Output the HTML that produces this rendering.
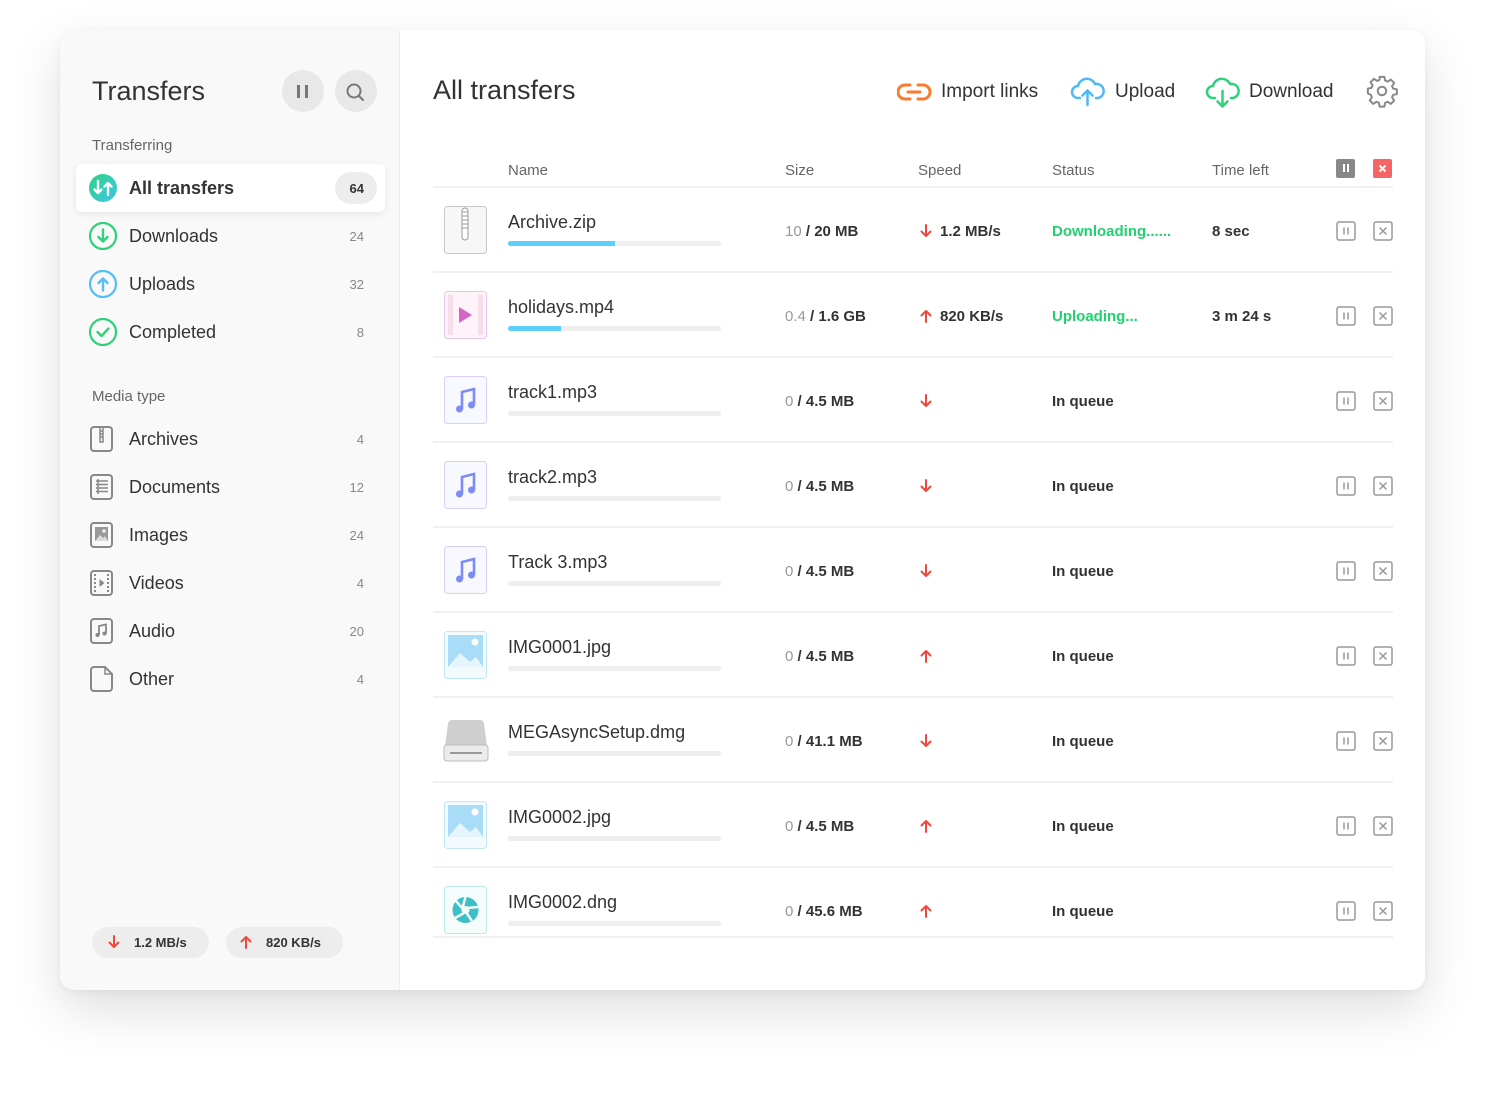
<!DOCTYPE html>
<html><head><meta charset="utf-8"><style>
*{margin:0;padding:0;box-sizing:border-box}
body{width:1486px;height:1100px;background:#fff;font-family:"Liberation Sans",sans-serif;color:#333;position:relative;overflow:hidden}
.card{position:absolute;left:60px;top:30px;width:1365px;height:960px;border-radius:14px;background:#fff;box-shadow:0 20px 50px rgba(0,0,0,.13),0 2px 8px rgba(0,0,0,.05);overflow:hidden}
.side{position:absolute;left:0;top:0;width:340px;height:960px;background:#f9f9f9;border-right:1px solid #eee}
.a{position:absolute}
.t{position:absolute;white-space:nowrap}
.item{position:absolute;left:16px;width:309px;height:48px}
.item .lbl{position:absolute;left:53px;top:14px;font-size:18px;color:#333}
.item .cnt{position:absolute;right:21px;top:17px;font-size:13px;color:#888}
.ic{position:absolute;left:13px;top:10px}
.row{position:absolute;left:373px;width:960px;height:85px;border-bottom:2px solid #f0f0f0}
.fi{position:absolute;left:11px;width:43px;height:48px;border-radius:3px}
.nm{position:absolute;left:75px;font-size:18px;color:#333}
.bar{position:absolute;left:75px;width:213px;height:5px;border-radius:3px;background:#eee;overflow:hidden}
.bar i{display:block;height:5px;background:#5bd0fb}
.sz{position:absolute;left:352px;font-size:15px;color:#333;font-weight:bold}
.sz span{color:#999;font-weight:normal}
.sp{position:absolute;left:485px}
.spt{position:absolute;left:507px;font-size:15px;font-weight:bold;color:#333}
.st{position:absolute;left:619px;font-size:15px;color:#333;font-weight:bold}
.tl{position:absolute;left:779px;font-size:15px;font-weight:bold;color:#333}
.pb{position:absolute;left:903px}
.xb{position:absolute;left:940px}
</style></head><body>
<div class="card">
<div class="side">
 <div class="t" style="left:32px;top:46px;font-size:27px;color:#333">Transfers</div>
 <div class="a" style="left:222px;top:40px;width:42px;height:42px;border-radius:50%;background:#e8e8e8"></div>
 <div class="a" style="left:237px;top:55px;width:3px;height:13px;background:#777"></div>
 <div class="a" style="left:245px;top:55px;width:3px;height:13px;background:#777"></div>
 <div class="a" style="left:275px;top:40px;width:42px;height:42px;border-radius:50%;background:#e8e8e8"></div>
 <svg class="a" style="left:284px;top:51px" width="24" height="24"><circle cx="10" cy="10" r="6.5" fill="none" stroke="#777" stroke-width="2"/><path d="M15 15l4 4" stroke="#777" stroke-width="2" stroke-linecap="round"/></svg>
 <div class="t" style="left:32px;top:107px;font-size:15px;color:#666">Transferring</div>
 <div class="item" style="top:134px;background:#fff;border-radius:6px;box-shadow:0 2px 8px rgba(0,0,0,.08)">
  <svg class="ic" width="30" height="30" style="left:12px;top:9px"><defs><linearGradient id="g" x1="0" y1="0" x2="1" y2="1"><stop offset="0" stop-color="#2ed483"/><stop offset="1" stop-color="#3fc4e8"/></linearGradient></defs><circle cx="15" cy="15" r="14" fill="url(#g)"/><path d="M10 8v12M6.5 16.5L10 20l3.5-3.5M20 22V10M16.5 13.5L20 10l3.5 3.5" stroke="#fff" stroke-width="2.4" fill="none" stroke-linecap="round" stroke-linejoin="round"/></svg>
  <div class="lbl" style="font-weight:bold">All transfers</div>
  <div class="a" style="right:8px;top:8px;width:42px;height:32px;border-radius:16px;background:#ededed"></div>
  <div class="cnt" style="color:#333;font-weight:bold">64</div>
 </div>
 <div class="item" style="top:182px"><svg class="ic" width="30" height="30" style="left:12px;top:9px"><circle cx="15" cy="15" r="13" fill="none" stroke="#2fd17a" stroke-width="2.2"/><path d="M15 8.5v12M10.5 16l4.5 4.5 4.5-4.5" stroke="#2fd17a" stroke-width="2.4" fill="none" stroke-linecap="round" stroke-linejoin="round"/></svg><div class="lbl">Downloads</div><div class="cnt">24</div></div>
 <div class="item" style="top:230px"><svg class="ic" width="30" height="30" style="left:12px;top:9px"><circle cx="15" cy="15" r="13" fill="none" stroke="#53bdf6" stroke-width="2.2"/><path d="M15 21.5v-12M10.5 14l4.5-4.5 4.5 4.5" stroke="#53bdf6" stroke-width="2.4" fill="none" stroke-linecap="round" stroke-linejoin="round"/></svg><div class="lbl">Uploads</div><div class="cnt">32</div></div>
 <div class="item" style="top:278px"><svg class="ic" width="30" height="30" style="left:12px;top:9px"><circle cx="15" cy="15" r="13" fill="none" stroke="#2fd17a" stroke-width="2.2"/><path d="M9.5 15l4 4 7-7.5" stroke="#2fd17a" stroke-width="2.4" fill="none" stroke-linecap="round" stroke-linejoin="round"/></svg><div class="lbl">Completed</div><div class="cnt">8</div></div>
 <div class="t" style="left:32px;top:358px;font-size:15px;color:#666">Media type</div>
 <div class="item" style="top:385px"><svg class="ic" width="26" height="28"><rect x="2" y="2" width="21" height="24" rx="3" fill="none" stroke="#888" stroke-width="2"/><path d="M11 3v14h3V3M11 6h3M11 9h3M11 12h3" stroke="#888" stroke-width="1.5" fill="none"/></svg><div class="lbl">Archives</div><div class="cnt">4</div></div>
 <div class="item" style="top:433px"><svg class="ic" width="26" height="28"><rect x="2" y="2" width="21" height="24" rx="3" fill="none" stroke="#888" stroke-width="2"/><path d="M7 8h12M7 11.5h12M7 15h12M7 18.5h12M9 6v15" stroke="#888" stroke-width="1.5"/></svg><div class="lbl">Documents</div><div class="cnt">12</div></div>
 <div class="item" style="top:481px"><svg class="ic" width="26" height="28"><rect x="2" y="2" width="21" height="24" rx="3" fill="none" stroke="#888" stroke-width="2"/><rect x="6" y="6" width="13" height="14" fill="#999"/><path d="M6 20l5-6 3 3 2-2 3 5z" fill="#ddd"/><circle cx="15" cy="10" r="1.8" fill="#eee"/></svg><div class="lbl">Images</div><div class="cnt">24</div></div>
 <div class="item" style="top:529px"><svg class="ic" width="26" height="28"><rect x="2" y="2" width="21" height="24" rx="3" fill="none" stroke="#888" stroke-width="2"/><path d="M6 5v18M19 5v18" stroke="#888" stroke-width="2" stroke-dasharray="2 2"/><path d="M10.5 10v8l5-4z" fill="#888"/></svg><div class="lbl">Videos</div><div class="cnt">4</div></div>
 <div class="item" style="top:577px"><svg class="ic" width="26" height="28"><rect x="2" y="2" width="21" height="24" rx="3" fill="none" stroke="#888" stroke-width="2"/><path d="M10 18V9l7-1.5v9" stroke="#888" stroke-width="1.8" fill="none"/><circle cx="8.5" cy="18" r="2" fill="#888"/><circle cx="15.5" cy="16.5" r="2" fill="#888"/></svg><div class="lbl">Audio</div><div class="cnt">20</div></div>
 <div class="item" style="top:625px"><svg class="ic" width="26" height="28"><path d="M5 2h11l7 7v14a3 3 0 0 1-3 3H5a3 3 0 0 1-3-3V5a3 3 0 0 1 3-3z" fill="none" stroke="#888" stroke-width="2"/><path d="M16 2v7h7" fill="none" stroke="#888" stroke-width="1.5"/></svg><div class="lbl">Other</div><div class="cnt">4</div></div>
 <div class="a" style="left:32px;top:897px;width:117px;height:31px;border-radius:16px;background:#ededed"></div>
 <svg class="a" style="left:46px;top:904px" width="16" height="16"><path d="M8 2v11M3.5 8.5L8 13l4.5-4.5" stroke="#f0473c" stroke-width="2" fill="none" stroke-linecap="round" stroke-linejoin="round"/></svg>
 <div class="t" style="left:74px;top:905px;font-size:13px;font-weight:bold;color:#333">1.2 MB/s</div>
 <div class="a" style="left:166px;top:897px;width:117px;height:31px;border-radius:16px;background:#ededed"></div>
 <svg class="a" style="left:178px;top:904px" width="16" height="16"><path d="M8 14V3M3.5 7.5L8 3l4.5 4.5" stroke="#f0473c" stroke-width="2" fill="none" stroke-linecap="round" stroke-linejoin="round"/></svg>
 <div class="t" style="left:206px;top:905px;font-size:13px;font-weight:bold;color:#333">820 KB/s</div>
</div>

<div class="t" style="left:373px;top:45px;font-size:27px;color:#333">All transfers</div>
<svg class="a" style="left:837px;top:50px" width="36" height="24"><path d="M13 5H8a7 7 0 0 0 0 14h5M21 5h5a7 7 0 0 1 0 14h-5M11 12h12" stroke="#fb7b2e" stroke-width="3" fill="none" stroke-linecap="round"/></svg>
<div class="t" style="left:881px;top:51px;font-size:19px;color:#333">Import links</div>
<svg class="a" style="left:1010px;top:44px" width="36" height="34"><path d="M10 24H8a6 6 0 0 1 0-12 9 9 0 0 1 17-2 7 7 0 0 1 3 14h-2" stroke="#4fb9f5" stroke-width="2.5" fill="none" stroke-linecap="round"/><path d="M17.5 31V17M12.5 21.5l5-5 5 5" stroke="#4fb9f5" stroke-width="2.5" fill="none" stroke-linecap="round" stroke-linejoin="round"/></svg>
<div class="t" style="left:1055px;top:51px;font-size:19px;color:#333">Upload</div>
<svg class="a" style="left:1145px;top:44px" width="36" height="36"><path d="M10 24H8a6 6 0 0 1 0-12 9 9 0 0 1 17-2 7 7 0 0 1 3 14h-2" stroke="#2fd17a" stroke-width="2.5" fill="none" stroke-linecap="round"/><path d="M17.5 17v15M12.5 27.5l5 5 5-5" stroke="#2fd17a" stroke-width="2.5" fill="none" stroke-linecap="round" stroke-linejoin="round"/></svg>
<div class="t" style="left:1189px;top:51px;font-size:19px;color:#333">Download</div>
<svg class="a" style="left:1305px;top:44px" width="34" height="34" viewBox="0 0 24 24"><path d="M10.3 2h3.4l.5 2.6 1.8.8 2.2-1.5 2.4 2.4-1.5 2.2.8 1.8 2.6.5v3.4l-2.6.5-.8 1.8 1.5 2.2-2.4 2.4-2.2-1.5-1.8.8-.5 2.6h-3.4l-.5-2.6-1.8-.8-2.2 1.5-2.4-2.4 1.5-2.2-.8-1.8L2 13.7v-3.4l2.6-.5.8-1.8-1.5-2.2 2.4-2.4 2.2 1.5 1.8-.8z" fill="none" stroke="#888" stroke-width="1.4" stroke-linejoin="round"/><circle cx="12" cy="12" r="3" fill="none" stroke="#888" stroke-width="1.4"/></svg>

<div class="t" style="left:448px;top:132px;font-size:15px;color:#666">Name</div>
<div class="t" style="left:725px;top:132px;font-size:15px;color:#666">Size</div>
<div class="t" style="left:858px;top:132px;font-size:15px;color:#666">Speed</div>
<div class="t" style="left:992px;top:132px;font-size:15px;color:#666">Status</div>
<div class="t" style="left:1152px;top:132px;font-size:15px;color:#666">Time left</div>
<div class="a" style="left:1276px;top:129px;width:19px;height:19px;border-radius:2px;background:#888"></div>
<div class="a" style="left:1283px;top:134px;width:2px;height:8px;background:#fff"></div><div class="a" style="left:1287px;top:134px;width:2px;height:8px;background:#fff"></div>
<div class="a" style="left:1313px;top:129px;width:19px;height:19px;border-radius:2px;background:#f56565"></div>
<svg class="a" style="left:1313px;top:129px" width="19" height="19"><path d="M6.5 6.5l6 6M12.5 6.5l-6 6" stroke="#fff" stroke-width="2"/></svg>
<div class="a" style="left:373px;top:156px;width:960px;height:2px;background:#f0f0f0"></div>

<div id="rows"></div>
</div>
<script>
var R=[
["zip","Archive.zip","10","20 MB","d","1.2 MB/s","Downloading......",1,"8 sec",50],
["vid","holidays.mp4","0.4","1.6 GB","u","820 KB/s","Uploading...",1,"3 m 24 s",25],
["mus","track1.mp3","0","4.5 MB","d","","In queue",0,"",0],
["mus","track2.mp3","0","4.5 MB","d","","In queue",0,"",0],
["mus","Track 3.mp3","0","4.5 MB","d","","In queue",0,"",0],
["img","IMG0001.jpg","0","4.5 MB","u","","In queue",0,"",0],
["dmg","MEGAsyncSetup.dmg","0","41.1 MB","d","","In queue",0,"",0],
["img","IMG0002.jpg","0","4.5 MB","u","","In queue",0,"",0],
["dng","IMG0002.dng","0","45.6 MB","u","","In queue",0,"",0]];
var ic={
zip:'<svg width="43" height="48"><rect x=".5" y=".5" width="42" height="47" rx="3" fill="#f7f7f7" stroke="#c8c8c8"/><rect x="18" y="2" width="6" height="32" rx="3" fill="#fff" stroke="#999"/><path d="M18 6h6M18 10h6M18 14h6M18 18h6M18 22h6" stroke="#999"/></svg>',
vid:'<svg width="43" height="48"><rect x=".5" y=".5" width="42" height="47" rx="3" fill="#fdf3f8" stroke="#e5c6ee"/><path d="M4 4h5v40H4zM34 4h5v40h-5z" fill="#f7dceb"/><path d="M15 16v16l13-8z" fill="#d466c7"/></svg>',
mus:'<svg width="43" height="48"><rect x=".5" y=".5" width="42" height="47" rx="3" fill="#f8f8ff" stroke="#d7cff5"/><path d="M18 33V16l12-3v16" stroke="#7c8cf2" stroke-width="2.6" fill="none"/><circle cx="15.5" cy="33" r="3.5" fill="#7c8cf2"/><circle cx="27.5" cy="29" r="3.5" fill="#7c8cf2"/></svg>',
img:'<svg width="43" height="48"><rect x=".5" y=".5" width="42" height="47" rx="3" fill="#f3fbff" stroke="#c3e6f7"/><rect x="4" y="4" width="35" height="32" fill="#a9dcf6"/><path d="M4 36l12-14 10 9 6-5 7 10z" fill="#e6f5fc"/><circle cx="31" cy="11" r="3.5" fill="#fff"/></svg>',
dmg:'<svg width="46" height="48"><path d="M5 8a4 4 0 0 1 4-4h28a4 4 0 0 1 4 4l3 22H2z" fill="#cfcfcf"/><rect x="1" y="29" width="44" height="16" rx="3" fill="#ececec" stroke="#bbb"/><path d="M7 37h32" stroke="#999" stroke-width="2"/></svg>',
dng:'<svg width="43" height="48"><rect x=".5" y=".5" width="42" height="47" rx="3" fill="#f4fcfc" stroke="#bfe8e8"/><circle cx="21.5" cy="24" r="13" fill="#3dbfc8"/><path d="M21.5 11l-3 11M34 21l-11 1M28 35l-6-9M11 32l9-5M12 15l7 8" stroke="#f4fcfc" stroke-width="2.5"/><circle cx="21.5" cy="24" r="4" fill="#f4fcfc"/></svg>'};
var h='';
R.forEach(function(r,i){var top=158+i*85;var last=i==8;
var ar=r[4]=='d'?'<path d="M8 2v11M3.5 8.5L8 13l4.5-4.5" stroke="#f0473c" stroke-width="2" fill="none" stroke-linecap="round" stroke-linejoin="round"/>':'<path d="M8 14V3M3.5 7.5L8 3l4.5 4.5" stroke="#f0473c" stroke-width="2" fill="none" stroke-linecap="round" stroke-linejoin="round"/>';
h+='<div class="row" style="top:'+top+'px;'+(last?'height:70px;':'')+'">'+
'<div class="fi" style="top:18px;'+(r[0]=='dmg'?'left:10px':'')+'">'+ic[r[0]]+'</div>'+
'<div class="nm" style="top:24px">'+r[1]+'</div>'+
'<div class="bar" style="top:53px"><i style="width:'+r[9]+'%"></i></div>'+
'<div class="sz" style="top:35px"><span>'+r[2]+'</span> / '+r[3]+'</div>'+
'<svg class="sp" style="top:35px" width="16" height="16">'+ar+'</svg>'+
(r[5]?'<div class="spt" style="top:35px">'+r[5]+'</div>':'')+
'<div class="st" style="top:35px;'+(r[7]?'color:#1fd16f':'')+'">'+r[6]+'</div>'+
(r[8]?'<div class="tl" style="top:35px">'+r[8]+'</div>':'')+
'<svg class="pb" style="top:33px" width="20" height="20"><rect x="1" y="1" width="18" height="18" rx="2" fill="none" stroke="#999" stroke-width="1.5"/><path d="M8 6.5v7M12 6.5v7" stroke="#999" stroke-width="1.5"/></svg>'+
'<svg class="xb" style="top:33px" width="20" height="20"><rect x="1" y="1" width="18" height="18" rx="2" fill="none" stroke="#999" stroke-width="1.5"/><path d="M6.5 6.5l7 7M13.5 6.5l-7 7" stroke="#999" stroke-width="1.5"/></svg>'+
'</div>';});
document.getElementById('rows').innerHTML=h;
</script>
</body></html>
